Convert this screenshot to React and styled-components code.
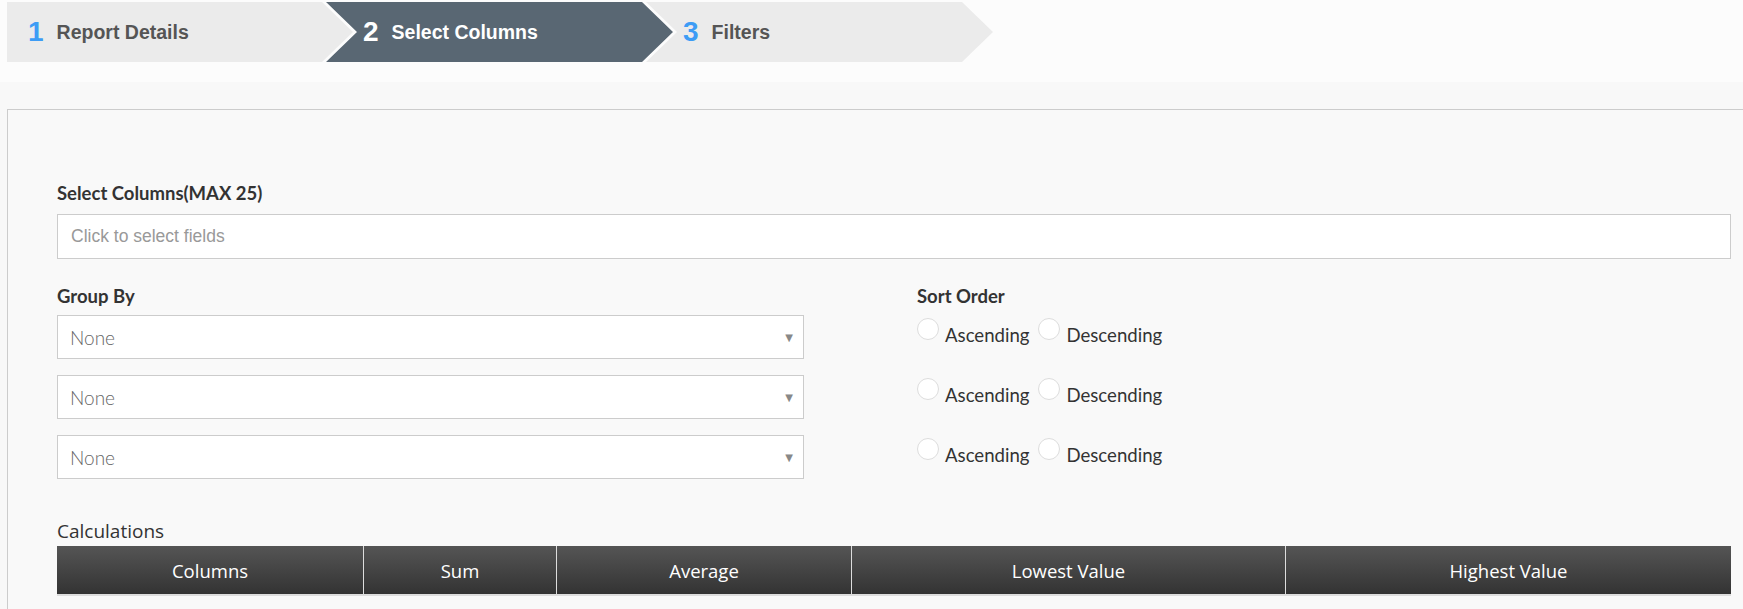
import React from "react";
import styled, { createGlobalStyle } from "styled-components";

const steps = [
    { num: 1, label: "Report Details" },
    { num: 2, label: "Select Columns", active: true },
    { num: 3, label: "Filters" },
];

const calcColumns = [
    { title: "Columns", width: "306px" },
    { title: "Sum", width: "193px" },
    { title: "Average", width: "295px" },
    { title: "Lowest Value", width: "434px" },
    { title: "Highest Value", width: "1fr" },
];

const GlobalStyle = createGlobalStyle`
    * {
        box-sizing: border-box;
    }
    body {
        margin: 0;
        background: #f8f8f8;
        font-family: "Lato", "Open Sans", sans-serif;
    }
`;

const App = () => {
    return (
        <>
            <GlobalStyle />
            <Header>
                <Steps>
                    {steps.map((step, index) => (
                        <Step key={step.num} $first={index === 0} $active={step.active}>
                            <StepNum $active={step.active}>{step.num}</StepNum>
                            <StepLabel $active={step.active}>{step.label}</StepLabel>
                        </Step>
                    ))}
                </Steps>
            </Header>

            <Panel>
                <Label>Select Columns(MAX 25)</Label>
                <FieldInput>Click to select fields</FieldInput>

                <Columns>
                    <div>
                        <Label>Group By</Label>
                        <SelectList>
                            {[0, 1, 2].map((i) => (
                                <Select key={i}>
                                    <SelectValue>None</SelectValue>
                                    <Caret>▼</Caret>
                                </Select>
                            ))}
                        </SelectList>
                    </div>
                    <div>
                        <Label>Sort Order</Label>
                        <SelectList>
                            {[0, 1, 2].map((i) => (
                                <RadioRow key={i}>
                                    <Radio />
                                    <RadioText>Ascending</RadioText>
                                    <Radio />
                                    <RadioText>Descending</RadioText>
                                </RadioRow>
                            ))}
                        </SelectList>
                    </div>
                </Columns>

                <CalcTitle>Calculations</CalcTitle>
                <CalcHead $cols={calcColumns.map((c) => c.width).join(" ")}>
                    {calcColumns.map((c) => (
                        <CalcCell key={c.title}>{c.title}</CalcCell>
                    ))}
                </CalcHead>
            </Panel>
        </>
    );
};

const Header = styled.div`
    background: #fcfcfc;
    padding: 2px 0 20px 7px;
`;
const Steps = styled.div`
    display: flex;
`;
const Step = styled.div`
    display: flex;
    align-items: center;
    height: 60px;
    width: ${(p) => (p.$first ? "346px" : "347px")};
    margin-left: ${(p) => (p.$first ? "0" : "-27px")};
    padding-left: ${(p) => (p.$first ? "21px" : "37px")};
    background: ${(p) => (p.$active ? "#596773" : "#ebebeb")};
    clip-path: ${(p) =>
        p.$first
            ? "polygon(0 0, calc(100% - 31px) 0, 100% 50%, calc(100% - 31px) 100%, 0 100%)"
            : "polygon(0 0, calc(100% - 31px) 0, 100% 50%, calc(100% - 31px) 100%, 0 100%, 31px 50%)"};
    font-family: "Liberation Sans", Arial, sans-serif;
    font-weight: bold;
`;
const StepNum = styled.span`
    font-size: 28px;
    color: ${(p) => (p.$active ? "#ffffff" : "#3d9cf5")};
    margin-right: 13px;
`;
const StepLabel = styled.span`
    font-size: 19.5px;
    color: ${(p) => (p.$active ? "#ffffff" : "#555555")};
`;

const Panel = styled.div`
    margin: 27px 0 0 7px;
    border-top: 1px solid #cccccc;
    border-left: 1px solid #cccccc;
    background: #f9f9f9;
    padding: 72px 12px 40px 49px;
`;
const Label = styled.div`
    font-family: "Lato", sans-serif;
    font-weight: bold;
    font-size: 18.5px;
    line-height: 22px;
    color: #333333;
`;
const FieldInput = styled.div`
    margin-top: 10px;
    height: 45px;
    border: 1px solid #cccccc;
    background: #ffffff;
    display: flex;
    align-items: center;
    padding-left: 13px;
    font-family: "Liberation Sans", Arial, sans-serif;
    font-size: 17.5px;
    color: #999999;
`;
const Columns = styled.div`
    display: grid;
    grid-template-columns: 860px 1fr;
    margin-top: 26px;
`;
const SelectList = styled.div`
    display: flex;
    flex-direction: column;
    gap: 16px;
    margin-top: 8px;
`;
const Select = styled.div`
    width: 747px;
    height: 44px;
    border: 1px solid #cccccc;
    background: #ffffff;
    display: flex;
    align-items: center;
    justify-content: space-between;
    padding: 0 10px 0 12px;
`;
const SelectValue = styled.span`
    font-family: "Lato", sans-serif;
    font-weight: 300;
    font-size: 19px;
    color: #666666;
`;
const Caret = styled.span`
    font-size: 10px;
    color: #888888;
    font-family: "DejaVu Sans", sans-serif;
`;
const RadioRow = styled.div`
    height: 44px;
    display: flex;
    align-items: flex-start;
`;
const Radio = styled.span`
    width: 22px;
    height: 22px;
    margin-top: 3px;
    border-radius: 50%;
    border: 1px solid #dddddd;
    background: #ffffff;
    flex-shrink: 0;
`;
const RadioText = styled.span`
    margin: 9px 9px 0 6px;
    font-family: "Lato", sans-serif;
    font-size: 18.6px;
    line-height: 22px;
    color: #333333;
`;
const CalcTitle = styled.div`
    margin-top: 40px;
    font-family: "Open Sans", sans-serif;
    font-size: 19px;
    line-height: 24px;
    color: #333333;
`;
const CalcHead = styled.div`
    margin-top: 3px;
    display: grid;
    grid-template-columns: ${(p) => p.$cols};
    height: 50px;
    border-bottom: 2px solid #dddddd;
`;
const CalcCell = styled.div`
    display: flex;
    align-items: center;
    justify-content: center;
    background: linear-gradient(#555555, #333333);
    border-left: 1px solid #dddddd;
    font-family: "Open Sans", sans-serif;
    font-size: 18.5px;
    color: #ffffff;
    &:first-child {
        border-left: none;
    }
`;

export default App;
